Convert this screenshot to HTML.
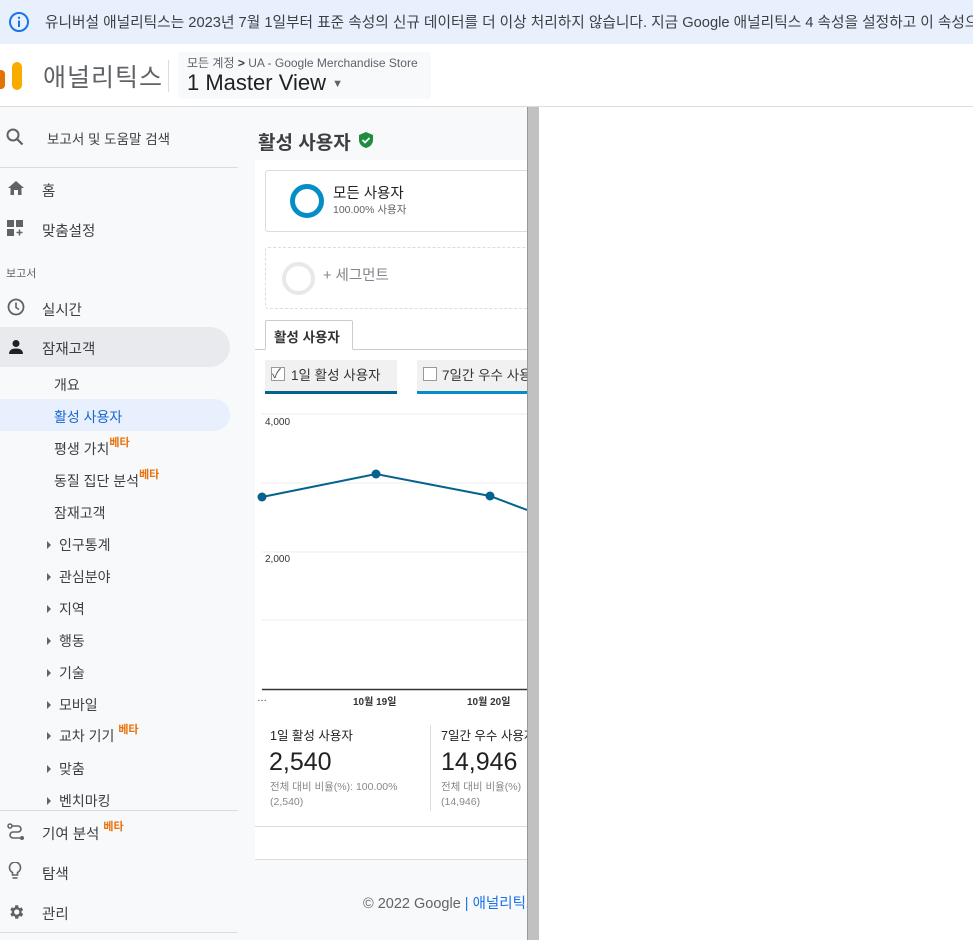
<!DOCTYPE html>
<html><head><meta charset="utf-8"><style>
*{margin:0;padding:0;box-sizing:border-box}
body{width:973px;height:940px;overflow:hidden;background:#f8f9fa;font-family:"Liberation Sans","Noto Sans CJK KR",sans-serif;color:#3c4043;position:relative}
.a{position:absolute;white-space:nowrap}
.nav{font-size:14.5px;color:#3c4043}
.sub{font-size:14px;color:#3c4043}
.beta{color:#e8710a;font-size:11px;font-weight:bold;vertical-align:top;position:relative;top:-5px}
.tri{display:inline-block;width:0;height:0;border-left:4px solid #5f6368;border-top:4px solid transparent;border-bottom:4px solid transparent;margin-right:8px;vertical-align:1px}
</style></head><body>
<div class="a" style="left:0;top:0;width:973px;height:44px;background:#e8f0fe;overflow:hidden">
<svg class="a" style="left:8px;top:11px" width="22" height="22" viewBox="0 0 22 22"><circle cx="11" cy="11" r="9" fill="none" stroke="#1a73e8" stroke-width="2"/><rect x="10" y="9.5" width="2" height="6.5" fill="#1a73e8"/><circle cx="11" cy="6.8" r="1.2" fill="#1a73e8"/></svg>
<div class="a" style="left:45px;top:11px;font-size:14.7px;color:#3c4043">유니버설 애널리틱스는 2023년 7월 1일부터 표준 속성의 신규 데이터를 더 이상 처리하지 않습니다. 지금 Google 애널리틱스 4 속성을 설정하고 이 속성으로 전환하세요.</div>
</div>
<div class="a" style="left:0;top:44px;width:973px;height:63px;background:#fff;border-bottom:1px solid #dadce0;overflow:hidden">
<div class="a" style="left:-4px;top:26px;width:9px;height:19px;background:#e37400;border-radius:4px"></div>
<div class="a" style="left:12px;top:18px;width:10px;height:28px;background:#f9ab00;border-radius:5px"></div>
</div>
<div class="a" style="left:43px;top:58px;font-size:25px;color:#5f6368;letter-spacing:1px">애널리틱스</div>
<div class="a" style="left:168px;top:60px;width:1px;height:32px;background:#dadce0"></div>
<div class="a" style="left:178px;top:52px;width:253px;height:47px;background:#f8f9fa;border-radius:4px"></div>
<div class="a" style="left:187px;top:54px;font-size:12px;color:#5f6368">모든 계정 <b style="color:#3c4043">&gt;</b> UA - Google Merchandise Store</div>
<div class="a" style="left:187px;top:70px;font-size:22px;color:#202124">1 Master View <span style="font-size:11px;color:#5f6368;vertical-align:3px">▼</span></div>
<!-- sidebar -->
<svg class="a" style="left:6px;top:128px" width="18" height="18" viewBox="0 0 18 18"><circle cx="7" cy="7" r="5.5" fill="none" stroke="#5f6368" stroke-width="2"/><path d="M11 11 L16.5 16.5" stroke="#5f6368" stroke-width="2.2"/></svg>
<div class="a nav" style="left:47px;top:128px;font-size:13.5px">보고서 및 도움말 검색</div>
<div class="a" style="left:0;top:167px;width:238px;height:1px;background:#dadce0"></div>
<svg class="a" style="left:7px;top:180px" width="18" height="16" viewBox="0 0 18 16"><path d="M9 1 L17 8 H14.5 V15 H11 V10 H7 V15 H3.5 V8 H1 Z" fill="#5f6368"/></svg>
<div class="a nav" style="left:42px;top:180px">홈</div>
<svg class="a" style="left:7px;top:220px" width="18" height="18" viewBox="0 0 18 18"><rect x="0" y="0" width="7" height="7" fill="#5f6368"/><rect x="9" y="0" width="7" height="7" fill="#5f6368"/><rect x="0" y="9" width="7" height="7" fill="#5f6368"/><path d="M12.5 9.5v6M9.5 12.5h6" stroke="#5f6368" stroke-width="1.5"/></svg>
<div class="a nav" style="left:42px;top:220px">맞춤설정</div>
<div class="a" style="left:6px;top:265px;font-size:11px;color:#5f6368">보고서</div>
<svg class="a" style="left:7px;top:298px" width="18" height="18" viewBox="0 0 18 18"><circle cx="9" cy="9" r="7.5" fill="none" stroke="#5f6368" stroke-width="1.8"/><path d="M9 4.5V9.5L12 11.5" fill="none" stroke="#5f6368" stroke-width="1.6"/></svg>
<div class="a nav" style="left:42px;top:299px">실시간</div>
<div class="a" style="left:0;top:327px;width:230px;height:40px;background:#e8eaed;border-radius:0 20px 20px 0"></div>
<svg class="a" style="left:8px;top:339px" width="16" height="16" viewBox="0 0 16 16"><circle cx="8" cy="4.5" r="3.5" fill="#202124"/><path d="M1 15c0-4 3-5.5 7-5.5s7 1.5 7 5.5z" fill="#202124"/></svg>
<div class="a nav" style="left:42px;top:338px">잠재고객</div>
<div class="a sub" style="left:54px;top:375px">개요</div>
<div class="a" style="left:0;top:399px;width:230px;height:32px;background:#e8f0fe;border-radius:0 16px 16px 0"></div>
<div class="a sub" style="left:54px;top:407px;color:#1967d2">활성 사용자</div>
<div class="a sub" style="left:54px;top:439px">평생 가치<span class="beta">베타</span></div>
<div class="a sub" style="left:54px;top:471px">동질 집단 분석<span class="beta">베타</span></div>
<div class="a sub" style="left:54px;top:503px">잠재고객</div>
<div class="a sub" style="left:47px;top:535px"><span class="tri"></span>인구통계</div>
<div class="a sub" style="left:47px;top:567px"><span class="tri"></span>관심분야</div>
<div class="a sub" style="left:47px;top:599px"><span class="tri"></span>지역</div>
<div class="a sub" style="left:47px;top:631px"><span class="tri"></span>행동</div>
<div class="a sub" style="left:47px;top:663px"><span class="tri"></span>기술</div>
<div class="a sub" style="left:47px;top:695px"><span class="tri"></span>모바일</div>
<div class="a sub" style="left:47px;top:726px"><span class="tri"></span>교차 기기 <span class="beta">베타</span></div>
<div class="a sub" style="left:47px;top:759px"><span class="tri"></span>맞춤</div>
<div class="a sub" style="left:47px;top:791px"><span class="tri"></span>벤치마킹</div>
<div class="a" style="left:0;top:810px;width:238px;height:1px;background:#dadce0"></div>
<svg class="a" style="left:7px;top:823px" width="18" height="18" viewBox="0 0 18 18"><circle cx="3" cy="3" r="2" fill="none" stroke="#5f6368" stroke-width="1.5"/><circle cx="15" cy="15" r="2" fill="#5f6368"/><path d="M5 3h6a3 3 0 0 1 0 6H6a3 3 0 0 0 0 6h7" fill="none" stroke="#5f6368" stroke-width="1.6"/></svg>
<div class="a nav" style="left:42px;top:823px">기여 분석 <span class="beta">베타</span></div>
<svg class="a" style="left:8px;top:862px" width="14" height="18" viewBox="0 0 14 18"><path d="M4.5 13v-2.5A5.5 5.5 0 1 1 9.5 10.5V13z" fill="none" stroke="#5f6368" stroke-width="1.6"/><path d="M4.5 16h5" stroke="#5f6368" stroke-width="1.6"/></svg>
<div class="a nav" style="left:42px;top:863px">탐색</div>
<svg class="a" style="left:7px;top:903px" width="18" height="18" viewBox="0 0 24 24"><path fill="#5f6368" d="M19.4 13a7.5 7.5 0 0 0 0-2l2.1-1.6-2-3.5-2.5 1a7 7 0 0 0-1.7-1L15 3h-4l-.4 2.7a7 7 0 0 0-1.7 1l-2.5-1-2 3.5L6.5 11a7.5 7.5 0 0 0 0 2l-2.1 1.6 2 3.5 2.5-1a7 7 0 0 0 1.7 1L11 21h4l.4-2.7a7 7 0 0 0 1.7-1l2.5 1 2-3.5zM13 15.5a3.5 3.5 0 1 1 0-7 3.5 3.5 0 0 1 0 7z"/></svg>
<div class="a nav" style="left:42px;top:903px">관리</div>
<div class="a" style="left:0;top:932px;width:238px;height:1px;background:#dadce0"></div>
<!-- main -->
<div class="a" style="left:258px;top:128px;font-size:19px;font-weight:bold;color:#3c4043">활성 사용자</div>
<svg class="a" style="left:359px;top:132px" width="14" height="16" viewBox="0 0 14 16"><path d="M7 0L14 3v5c0 4-3 7-7 8C3 15 0 12 0 8V3z" fill="#1e8e3e"/><path d="M3.5 8l2.5 2.5 4.5-4.5" fill="none" stroke="#fff" stroke-width="1.7"/></svg>
<div class="a" style="left:255px;top:160px;width:272px;height:700px;background:#fff;border-bottom:1px solid #dadce0;overflow:hidden">
<div class="a" style="left:10px;top:10px;width:270px;height:62px;border:1px solid #dadce0;border-radius:3px;background:#fff"></div>
<div class="a" style="left:35px;top:24px;width:34px;height:34px;border:5px solid #058dc7;border-radius:50%"></div>
<div class="a" style="left:78px;top:22px;font-size:14.5px;color:#202124">모든 사용자</div>
<div class="a" style="left:78px;top:42px;font-size:10.5px;color:#5f6368">100.00% 사용자</div>
<div class="a" style="left:10px;top:87px;width:270px;height:62px;border:1px dashed #dadce0;border-radius:3px"></div>
<div class="a" style="left:27px;top:102px;width:33px;height:33px;border:4px solid #e8e8e8;border-radius:50%"></div>
<div class="a" style="left:68px;top:104px;font-size:14.5px;color:#80868b">+ 세그먼트</div>
<div class="a" style="left:0;top:189px;width:272px;height:1px;background:#ccc"></div>
<div class="a" style="left:10px;top:160px;width:88px;height:30px;border:1px solid #ccc;border-bottom:1px solid #fff;background:#fff;border-radius:2px 2px 0 0"></div>
<div class="a" style="left:19px;top:166px;font-size:13.5px;font-weight:bold;color:#333">활성 사용자</div>
<div class="a" style="left:10px;top:200px;width:132px;height:34px;background:#f1f1f1;border-bottom:3px solid #05628e"></div>
<div class="a" style="left:16px;top:207px;width:14px;height:14px;border:1px solid #999;background:#fff;font-size:13px;line-height:11px;color:#555">✓</div>
<div class="a" style="left:36px;top:204px;font-size:13.5px;color:#333">1일 활성 사용자</div>
<div class="a" style="left:162px;top:200px;width:120px;height:34px;background:#f1f1f1;border-bottom:3px solid #058dc7"></div>
<div class="a" style="left:168px;top:207px;width:14px;height:14px;border:1px solid #999;background:#fff"></div>
<div class="a" style="left:187px;top:204px;font-size:13.5px;color:#333">7일간 우수 사용자</div>
<svg class="a" style="left:0;top:240px" width="272" height="300"><g stroke="#eee"><line x1="7" y1="14" x2="272" y2="14"/><line x1="7" y1="83" x2="272" y2="83"/><line x1="7" y1="152" x2="272" y2="152"/><line x1="7" y1="220" x2="272" y2="220"/></g><line x1="7" y1="289.5" x2="272" y2="289.5" stroke="#333" stroke-width="1.5"/><polyline points="7,97 121,74 235,96 272,110" fill="none" stroke="#05628e" stroke-width="2"/><g fill="#05628e"><circle cx="7" cy="97" r="4.5"/><circle cx="121" cy="74" r="4.5"/><circle cx="235" cy="96" r="4.5"/></g></svg>
<div class="a" style="left:10px;top:257px;font-size:10px;color:#333">4,000</div>
<div class="a" style="left:10px;top:394px;font-size:10px;color:#333">2,000</div>
<div class="a" style="left:2px;top:533px;font-size:10px;color:#333">…</div>
<div class="a" style="left:98px;top:533px;font-size:10px;color:#333;font-weight:bold">10월 19일</div>
<div class="a" style="left:212px;top:533px;font-size:10px;color:#333;font-weight:bold">10월 20일</div>
<div class="a" style="left:15px;top:565px;font-size:12.5px;color:#222">1일 활성 사용자</div>
<div class="a" style="left:14px;top:588px;font-size:25px;color:#222">2,540</div>
<div class="a" style="left:15px;top:620px;font-size:10.5px;color:#888;line-height:15px">전체 대비 비율(%): 100.00%<br>(2,540)</div>
<div class="a" style="left:175px;top:565px;width:1px;height:86px;background:#ddd"></div>
<div class="a" style="left:186px;top:565px;font-size:12.5px;color:#222">7일간 우수 사용자</div>
<div class="a" style="left:186px;top:588px;font-size:25px;color:#222">14,946</div>
<div class="a" style="left:186px;top:620px;font-size:10.5px;color:#888;line-height:15px">전체 대비 비율(%)<br>(14,946)</div>
<div class="a" style="left:0;top:666px;width:272px;height:1px;background:#dadce0"></div>
</div>
<div class="a" style="left:240px;top:880px;width:287px;height:40px;overflow:hidden">
<div class="a" style="left:123px;top:12px;font-size:14.5px;color:#5f6368">© 2022 Google <span style="color:#1a73e8">| 애널리틱스 홈</span></div>
</div>
<div class="a" style="left:527px;top:107px;width:12px;height:833px;background:#c1c1c1;border-left:1px solid #999"></div>
<div class="a" style="left:539px;top:107px;width:434px;height:833px;background:#fff"></div>
</body></html>
